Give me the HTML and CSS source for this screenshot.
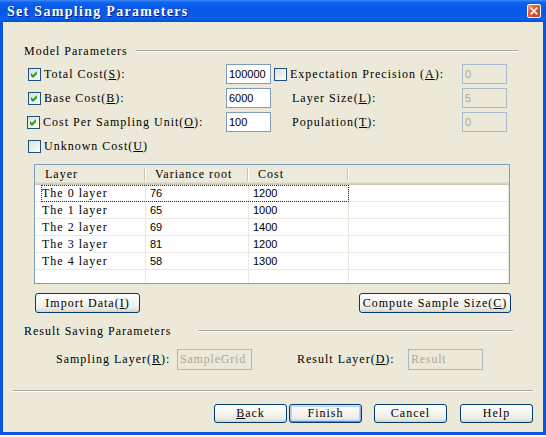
FILE: index.html
```html
<!DOCTYPE html>
<html>
<head>
<meta charset="utf-8">
<link rel="stylesheet" href="styles.css">
</head>
<body>
<div class="window">
  <div class="titlebar">
    <span class="title">Set Sampling Parameters</span>
    <span class="close"><svg width="13" height="13" viewBox="0 0 13 13"><path d="M3.5 3.5 L9.5 9.5 M9.5 3.5 L3.5 9.5" stroke="#fff" stroke-width="1.8" stroke-linecap="square"/></svg></span>
  </div>
  <div class="frame">
    <div class="group-head model"><span>Model Parameters</span><i class="rule"></i></div>

    <div class="params">
      <label class="chk"><svg class="cb" viewBox="0 0 13 13"><defs><linearGradient id="g" x1="0" y1="0" x2="1" y2="1"><stop offset="0" stop-color="#DCDCD7"/><stop offset="1" stop-color="#FFFFFF"/></linearGradient></defs><rect x="0.5" y="0.5" width="12" height="12" fill="url(#g)" stroke="#1C5180"/><path d="M3 5 L5 7 L9 3 L9 6 L5 10 L3 8 Z" fill="#21A121"/></svg><span>Total Cost(<u>S</u>):</span></label>
      <div class="tb">100000</div>
      <label class="chk right"><svg class="cb" viewBox="0 0 13 13"><rect x="0.5" y="0.5" width="12" height="12" fill="url(#g)" stroke="#1C5180"/></svg><span>Expectation Precision (<u>A</u>):</span></label>
      <div class="tb dis">0</div>

      <label class="chk"><svg class="cb" viewBox="0 0 13 13"><rect x="0.5" y="0.5" width="12" height="12" fill="url(#g)" stroke="#1C5180"/><path d="M3 5 L5 7 L9 3 L9 6 L5 10 L3 8 Z" fill="#21A121"/></svg><span>Base Cost(<u>B</u>):</span></label>
      <div class="tb">6000</div>
      <span class="plain">Layer Size(<u>L</u>):</span>
      <div class="tb dis">5</div>

      <label class="chk shift"><svg class="cb" viewBox="0 0 13 13"><rect x="0.5" y="0.5" width="12" height="12" fill="url(#g)" stroke="#1C5180"/><path d="M3 5 L5 7 L9 3 L9 6 L5 10 L3 8 Z" fill="#21A121"/></svg><span>Cost Per Sampling Unit(<u>O</u>):</span></label>
      <div class="tb">100</div>
      <span class="plain">Population(<u>T</u>):</span>
      <div class="tb dis">0</div>

      <label class="chk"><svg class="cb" viewBox="0 0 13 13"><rect x="0.5" y="0.5" width="12" height="12" fill="url(#g)" stroke="#1C5180"/></svg><span>Unknown Cost(<u>U</u>)</span></label>
    </div>

    <div class="lv">
      <div class="lv-head">
        <div class="hc">Layer</div>
        <div class="hc">Variance root</div>
        <div class="hc">Cost</div>
        <div class="hc last"></div>
      </div>
      <div class="lv-row focused"><div class="c name">The 0 layer</div><div class="c num">76</div><div class="c num">1200</div><div class="c"></div></div>
      <div class="lv-row"><div class="c name">The 1 layer</div><div class="c num">65</div><div class="c num">1000</div><div class="c"></div></div>
      <div class="lv-row"><div class="c name">The 2 layer</div><div class="c num">69</div><div class="c num">1400</div><div class="c"></div></div>
      <div class="lv-row"><div class="c name">The 3 layer</div><div class="c num">81</div><div class="c num">1200</div><div class="c"></div></div>
      <div class="lv-row"><div class="c name">The 4 layer</div><div class="c num">58</div><div class="c num">1300</div><div class="c"></div></div>
      <div class="lv-row"><div class="c name"></div><div class="c num"></div><div class="c num"></div><div class="c"></div></div>
    </div>

    <div class="actions">
      <div class="btn import">Import Data(<u>I</u>)</div>
      <div class="btn compute">Compute Sample Size(<u>C</u>)</div>
    </div>

    <div class="group-head result"><span>Result Saving Parameters</span><i class="rule"></i></div>

    <div class="result-row">
      <span class="rl1">Sampling Layer(<u>R</u>):</span>
      <div class="tb dis txt">SampleGrid</div>
      <span class="rl2">Result Layer(<u>D</u>):</span>
      <div class="tb dis txt">Result</div>
    </div>

    <div class="sep"></div>

    <div class="footer">
      <div class="btn fb"><span><u>B</u>ack</span></div>
      <div class="btn fb finish">Finish</div>
      <div class="btn fb cancel">Cancel</div>
      <div class="btn fb help">Help</div>
    </div>
  </div>
</div>
</body>
</html>
```

FILE: styles.css
```css
html, body {
  margin: 0;
  padding: 0;
  background: #ffffff;
}
body {
  width: 546px;
  height: 437px;
  overflow: hidden;
}
.window {
  width: 546px;
  height: 435px;
  display: flex;
  flex-direction: column;
  font-family: "Liberation Serif", "Times New Roman", serif;
  font-size: 12px;
  letter-spacing: 1px;
  color: #000;
}
u { text-decoration: underline; text-underline-offset: 1px; }

.titlebar {
  flex: none;
  height: 22px;
  box-sizing: border-box;
  display: flex;
  align-items: center;
  justify-content: space-between;
  padding: 0 5px 0 7px;
  background: linear-gradient(#3E8DF8 0, #1466F0 2px, #0A5CEA 5px, #0658E8 50%, #0A5FEC 85%, #0050D8 100%);
}
.title {
  color: #fff;
  font-weight: bold;
  font-size: 14px;
  letter-spacing: 1.3px;
  text-shadow: 1px 1px 0 #0A1E80;
  margin-top: 1px;
}
.close {
  width: 14px;
  height: 14px;
  box-sizing: border-box;
  border: 1px solid #fff;
  border-radius: 2px;
  background: linear-gradient(135deg, #F2A083 0, #E05A34 40%, #C9401A 100%);
  display: flex;
  align-items: center;
  justify-content: center;
}
.close svg { width: 12px; height: 12px; }

.frame {
  flex: 1;
  background: #ECE9D8;
  border: 3px solid #0B55E3;
  border-top: none;
  display: flex;
  flex-direction: column;
}

.group-head {
  display: flex;
  align-items: center;
  height: 14px;
  padding-left: 21px;
  white-space: nowrap;
}
.group-head.model { margin-top: 22px; }
.group-head span { width: 96px; flex: none; }
.group-head.result span { width: 144px; }
.rule {
  flex: 1;
  height: 0;
  border-top: 1px solid #ACA899;
  border-bottom: 1px solid #FFFFFF;
}
.model .rule { margin-left: 16px; margin-right: 25px; }
.result .rule { margin-left: 30px; margin-right: 30px; }

.params {
  display: grid;
  grid-template-columns: 198px 45px 191px 45px;
  grid-auto-rows: 20px;
  row-gap: 4px;
  margin-top: 6px;
  padding-left: 25px;
}
.chk {
  display: flex;
  align-items: center;
  gap: 3px;
  white-space: nowrap;
}
.chk .cb { width: 13px; height: 13px; flex: none; margin-top: 1px; }
.chk.right { padding-left: 3px; }
.chk.shift { margin-left: -1px; }
.plain {
  display: flex;
  align-items: center;
  padding-left: 21px;
  white-space: nowrap;
}

.tb {
  box-sizing: border-box;
  height: 20px;
  border: 1px solid #7F9DB9;
  background: #fff;
  font-family: "Liberation Sans", Arial, sans-serif;
  font-size: 11px;
  letter-spacing: 0;
  padding-left: 2px;
  display: flex;
  align-items: center;
}
.tb.dis {
  background: #ECE9D8;
  border-color: #A9B8CB;
  color: #ACA899;
}
.tb.txt {
  font-family: "Liberation Serif", "Times New Roman", serif;
  font-size: 12px;
  letter-spacing: 0.8px;
}

.lv {
  box-sizing: border-box;
  margin: 8px 0 0 31px;
  width: 476px;
  height: 120px;
  border: 1px solid #7F9DB9;
  background: #fff;
  overflow: hidden;
}
.lv-head {
  display: grid;
  grid-template-columns: 110px 103px 100px 1fr;
  height: 20px;
  background: #EBEADB;
  box-shadow: inset 0 -1px 0 #CBC7B8, inset 0 -2px 0 #D6D2C2, inset 0 -3px 0 #E2DECD;
}
.hc {
  position: relative;
  padding-left: 10px;
  line-height: 19px;
  white-space: nowrap;
}
.hc::after {
  content: "";
  position: absolute;
  right: 0;
  top: 3px;
  bottom: 4px;
  width: 1px;
  background: #C7C5B2;
  box-shadow: 1px 0 0 #FFFFFF;
}
.hc.last::after { display: none; }

.lv-row {
  position: relative;
  display: grid;
  grid-template-columns: 111px 103px 100px 1fr;
  height: 17px;
}
.c {
  box-sizing: border-box;
  border-right: 1px solid #EBE9DE;
  border-bottom: 1px solid #EBE9DE;
  line-height: 16px;
  white-space: nowrap;
}
.c.name { padding-left: 7px; }
.c.num {
  padding-left: 4px;
  font-family: "Liberation Sans", Arial, sans-serif;
  font-size: 11px;
  letter-spacing: 0;
}
.lv-row.focused::after {
  content: "";
  position: absolute;
  left: 6px;
  top: 0;
  width: 308px;
  height: 17px;
  box-sizing: border-box;
  border: 1px dotted #333;
}

.actions {
  display: flex;
  justify-content: space-between;
  margin-top: 9px;
  padding: 0 32px;
}
.btn {
  box-sizing: border-box;
  height: 20px;
  border: 1px solid #003C74;
  border-radius: 3px;
  background: linear-gradient(#FFFFFF 0, #F6F6F2 40%, #EEEDE6 75%, #E3E0D6 90%, #D6D0C5 100%);
  display: flex;
  align-items: center;
  justify-content: center;
  white-space: nowrap;
}
.btn.import { width: 105px; }
.btn.compute { width: 152px; }

.group-head.result { margin-top: 11px; }

.result-row {
  display: flex;
  align-items: center;
  height: 21px;
  margin-top: 11px;
  padding-left: 56px;
}
.result-row .tb { height: 21px; width: 75px; }
.rl1 { width: 121px; margin-left: -3px; white-space: nowrap; }
.rl2 { width: 111px; margin-left: 45px; white-space: nowrap; }

.sep {
  margin: 20px 10px 0 10px;
  height: 0;
  border-top: 1px solid #ACA899;
  border-bottom: 1px solid #FFFFFF;
}

.footer {
  display: flex;
  margin-top: 12px;
  padding-left: 211px;
}
.btn.fb { width: 73px; height: 19px; }
.btn.finish {
  margin-left: 2px;
  box-shadow: inset 0 1px 0 #CEE7FF, inset 0 -1px 0 #6982EE, inset 1px 0 0 #B2CCF6, inset -1px 0 0 #8CA9EE, inset 0 0 0 2px #BCD1F8;
}
.btn.cancel { margin-left: 12px; }
.btn.help { margin-left: 13px; }
```
